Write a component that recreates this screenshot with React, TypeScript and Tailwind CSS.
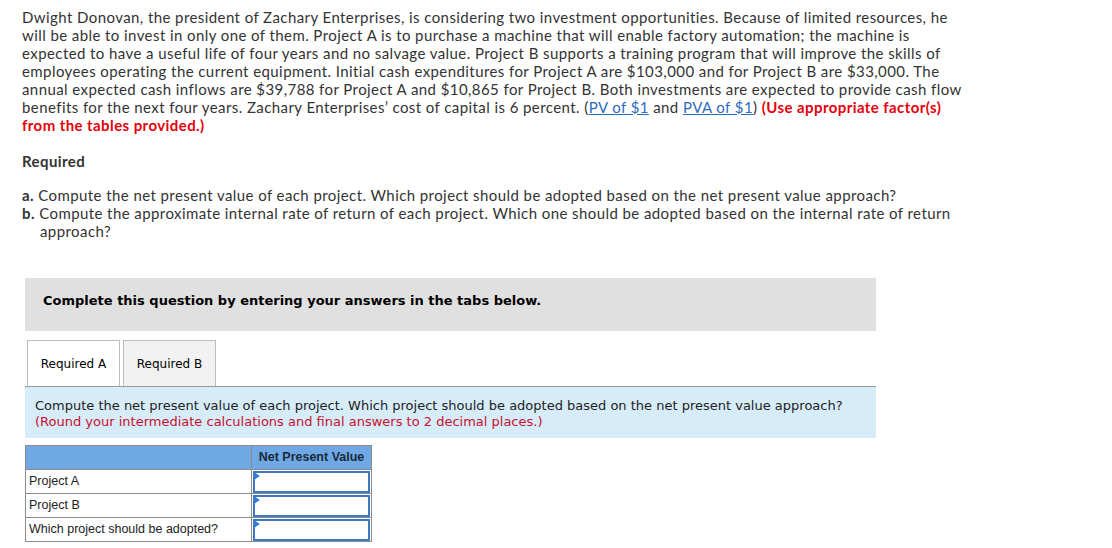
import React from "react";

const rows = ["Project A", "Project B", "Which project should be adopted?"];

function AnswerCell() {
  return (
    <td className="border border-[#8c8c8c] p-0 h-[24px] w-[120px]">
      <div className="relative h-[22px] mx-[1px] border-2 border-[#3d78c2] bg-white">
        {/* little marker in the corner */}
        <span className="absolute left-[-1px] top-[-1px] w-0 h-0 border-t-[4px] border-b-[4px] border-l-[6px] border-t-transparent border-b-transparent border-l-[#3a7bd5]" />
      </div>
    </td>
  );
}

export default function App() {
  return (
    <div className="w-[1112px] h-[548px] bg-white overflow-hidden pl-[22px] pt-[8px] text-[#333]">
      {/* Problem text */}
      <div className="font-['Lato',sans-serif] text-[15px] leading-[18px] tracking-[0.42px] whitespace-nowrap">
        <p>
          Dwight Donovan, the president of Zachary Enterprises, is considering two investment opportunities. Because of limited resources, he
          <br />
          will be able to invest in only one of them. Project A is to purchase a machine that will enable factory automation; the machine is
          <br />
          expected to have a useful life of four years and no salvage value. Project B supports a training program that will improve the skills of
          <br />
          employees operating the current equipment. Initial cash expenditures for Project A are $103,000 and for Project B are $33,000. The
          <br />
          annual expected cash inflows are $39,788 for Project A and $10,865 for Project B. Both investments are expected to provide cash flow
          <br />
          benefits for the next four years. Zachary Enterprises’ cost of capital is 6 percent. (
          <a className="text-[#2d6bbd] underline">PV of $1</a> and{" "}
          <a className="text-[#2d6bbd] underline">PVA of $1</a>){" "}
          <span className="font-bold text-[#e5000b]">(Use appropriate factor(s)</span>
          <br />
          <span className="font-bold text-[#e5000b]">from the tables provided.)</span>
        </p>

        <p className="font-bold mt-[18px]">Required</p>

        <div className="mt-[16px]">
          <p>
            <b>a.</b> Compute the net present value of each project. Which project should be adopted based on the net present value approach?
          </p>
          <p>
            <b>b.</b> Compute the approximate internal rate of return of each project. Which one should be adopted based on the internal rate of return
          </p>
          <p className="pl-[18px]">approach?</p>
        </div>
      </div>

      {/* Tabs widget */}
      <div className="ml-[3px] mt-[38px] w-[851px] font-['DejaVu_Sans',sans-serif]">
        <div className="bg-[#e0e0e0] h-[53px] pt-[15px] pl-[18px] text-[13px] leading-[16px] font-bold text-black">
          Complete this question by entering your answers in the tabs below.
        </div>

        <div className="flex gap-[3px] pl-[2px] mt-[9px] border-b border-[#999] text-[12px] text-black">
          <div className="w-[93px] h-[46px] flex items-center justify-center bg-white border border-b-0 border-[#bdbdbd]">
            Required A
          </div>
          <div className="w-[93px] h-[46px] flex items-center justify-center bg-[#f2f2f2] border border-b-0 border-[#bdbdbd]">
            Required B
          </div>
        </div>

        <div className="bg-[#d7ecf9] h-[51px] pl-[10px] pt-[11px] text-[13px] leading-[16px] text-[#222]">
          <p>Compute the net present value of each project. Which project should be adopted based on the net present value approach?</p>
          <p className="text-[#c8102e]">(Round your intermediate calculations and final answers to 2 decimal places.)</p>
        </div>

        <table className="mt-[7px] border-collapse font-['Liberation_Sans',sans-serif] text-[12.5px] text-[#222]">
          <thead>
            <tr className="bg-[#6fa8e4] h-[24px]">
              <th className="border border-[#8c8c8c] w-[226px]" />
              <th className="border border-[#8c8c8c] w-[120px] text-center font-bold text-[#1b2a3a]">
                Net Present Value
              </th>
            </tr>
          </thead>
          <tbody>
            {rows.map((r) => (
              <tr key={r} className="h-[24px]">
                <td className="border border-[#8c8c8c] px-[3px] bg-white">{r}</td>
                <AnswerCell />
              </tr>
            ))}
          </tbody>
        </table>
      </div>
    </div>
  );
}
